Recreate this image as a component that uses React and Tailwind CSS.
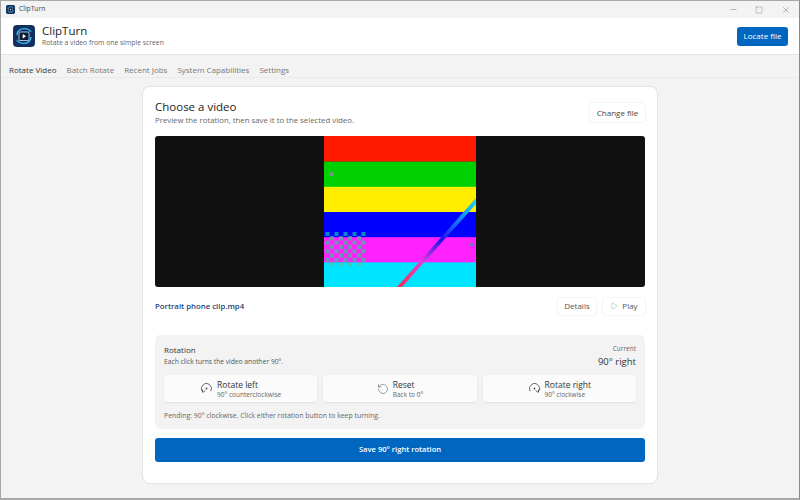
import { Minus, Square, X, Play, RotateCcw } from 'lucide-react'

const font = { fontFamily: '"Open Sans", "Noto Sans", sans-serif' }

const tabs = ['Rotate Video', 'Batch Rotate', 'Recent Jobs', 'System Capabilities', 'Settings']
const stripes = ['#ff1a00', '#00d000', '#ffee00', '#0000ff', '#ff22ff', '#00e5ff']

function AppLogo({ size }) {
  return (
    <svg width={size} height={size} viewBox="0 0 22 22">
      <rect width="22" height="22" rx="4" fill="#12305f" />
      <rect x="6" y="7" width="10" height="8.5" rx="1" fill="#0b1a38" stroke="#cfe6f7" strokeWidth="0.8" />
      <path d="M9.7 9l3.4 2.2-3.4 2.2z" fill="#ffffff" />
      <path d="M4 10C4 5.5 8 3.6 11 3.6c3 0 5.6 1 7 3.4" fill="none" stroke="#39b6ea" strokeWidth="1.4" />
      <path d="M18 12c0 4.5-4 6.4-7 6.4-3 0-5.6-1-7-3.4" fill="none" stroke="#39b6ea" strokeWidth="1.4" />
    </svg>
  )
}

// circular arrow with a dot in the middle, mirrored for the left turn
function TurnIcon({ left }) {
  return (
    <svg width="13" height="13" viewBox="0 0 13 13" fill="none" stroke="#444" strokeWidth="0.8" className={left ? '-scale-x-100' : ''}>
      <path d="M2.2 9.2A5 5 0 1 1 10.2 10" />
      <path d="M7.6 8.6l2.6 1.8.4-3" />
      <circle cx="6.5" cy="6.5" r="0.9" fill="#444" stroke="none" />
    </svg>
  )
}

function VideoFrame() {
  const dots = []
  for (let row = 0; row < 8; row++) {
    for (let col = 0; col < 9; col++) {
      if ((row + col) % 2 === 0) dots.push([1.5 + col * 4.5, 96 + row * 4.3])
    }
  }
  const dotColor = (y) => (y < 100 ? '#0a84c8' : y > 125 ? '#40c8b8' : '#6c94b4')
  return (
    <svg width="152" height="151" viewBox="0 0 152 151" className="block">
      <defs>
        <linearGradient id="streak" x1="72" y1="151" x2="152" y2="62" gradientUnits="userSpaceOnUse">
          <stop offset="0" stopColor="#ff2a4a" />
          <stop offset="0.3" stopColor="#e040d0" />
          <stop offset="0.55" stopColor="#2010f0" />
          <stop offset="0.8" stopColor="#1090ff" />
          <stop offset="1" stopColor="#20e0e0" />
        </linearGradient>
      </defs>
      {stripes.map((color, i) => (
        <rect key={color} x="0" y={i * 25.17 + (i ? 0.5 : 0)} width="152" height="25.8" fill={color} />
      ))}
      <rect x="5" y="36" width="5" height="4" fill="#6a9a70" />
      <rect x="145" y="107" width="4" height="3" fill="#7a70c0" />
      {dots.map(([x, y], i) => (
        <rect key={i} x={x} y={y} width="4" height="4" fill={dotColor(y)} />
      ))}
      <path d="M73 151L152 62v6L78 151z" fill="url(#streak)" />
    </svg>
  )
}

function RotationButton({ icon, title, sub }) {
  return (
    <button className="flex-1 h-[27px] bg-[#fbfbfb] rounded-[3px] shadow-[0_1px_2px_rgba(0,0,0,0.08)] flex items-center justify-center gap-[4px]">
      {icon}
      <span className="flex flex-col items-start">
        <span className="text-[8.5px] leading-[11px] text-[#333]">{title}</span>
        <span className="text-[6.5px] leading-[9px] text-[#666]">{sub}</span>
      </span>
    </button>
  )
}

export default function App() {
  return (
    <div style={font} className="w-[800px] h-[500px] overflow-hidden bg-[#f3f3f3] flex flex-col border-t border-l border-[#a8a8a8] border-b-2 border-r border-r-[#8a8a8a]">
      {/* Title bar */}
      <div className="h-[17px] flex items-center shrink-0 pl-[5px]">
        <AppLogo size={9} />
        <span className="ml-[4px] text-[6.7px] text-[#444]">ClipTurn</span>
        <div className="ml-auto flex items-center text-[#555]">
          <Minus size={9} strokeWidth={1} className="mr-[17px]" />
          <Square size={8} strokeWidth={1} className="mr-[18px]" />
          <X size={10} strokeWidth={1} className="mr-[8px]" />
        </div>
      </div>

      {/* Header */}
      <div className="h-[37px] bg-white flex items-center shrink-0 pl-[12px] pr-[11px] border-b border-[#e4e4e4]">
        <AppLogo size={22} />
        <div className="ml-[7px] flex flex-col">
          <span className="text-[11.5px] leading-[14px] text-[#222]">ClipTurn</span>
          <span className="text-[6.8px] leading-[10px] text-[#666]">Rotate a video from one simple screen</span>
        </div>
        <button className="ml-auto w-[51px] h-[19px] rounded-[3px] bg-[#0067c0] text-white text-[8px] font-medium">Locate file</button>
      </div>

      {/* Tabs */}
      <div className="h-[23px] flex items-center shrink-0 pl-[8px] pt-[7px] gap-[10px] border-b border-[#ebebeb]">
        {tabs.map((tab, i) => (
          <span key={tab} className={`text-[8px] ${i === 0 ? 'text-[#333]' : 'text-[#777]'}`}>{tab}</span>
        ))}
      </div>

      {/* Card */}
      <div className="flex-1 flex justify-center pt-[8px]">
        <div className="w-[516px] h-[398px] bg-white rounded-[8px] border border-[#e5e5e5] px-[12px] pt-[12px] flex flex-col">
          <div className="flex items-start justify-between h-[37px]">
            <div className="flex flex-col">
              <span className="text-[11.5px] leading-[15px] text-[#222]">Choose a video</span>
              <span className="text-[7.8px] leading-[12px] text-[#666]">Preview the rotation, then save it to the selected video.</span>
            </div>
            <button className="mt-[4px] w-[55px] h-[19px] bg-white rounded-[3px] shadow-[0_0_2px_rgba(0,0,0,0.16)] text-[8px] text-[#444]">Change file</button>
          </div>

          <div className="h-[151px] bg-[#111111] rounded-[3px] flex justify-center overflow-hidden">
            <VideoFrame />
          </div>

          <div className="h-[38px] flex items-center justify-between">
            <span className="pt-[2px] text-[7.8px] font-semibold text-[#1f3f78]">Portrait phone clip.mp4</span>
            <div className="flex items-center gap-[7px]">
              <button className="w-[38px] h-[17px] bg-white rounded-[3px] shadow-[0_0_2px_rgba(0,0,0,0.15)] text-[8px] text-[#555]">Details</button>
              <button className="w-[42px] h-[17px] bg-white rounded-[3px] shadow-[0_0_2px_rgba(0,0,0,0.15)] text-[8px] text-[#555] flex items-center justify-center gap-[4px]">
                <Play size={8} strokeWidth={1} className="text-[#4a9a50]" />
                Play
              </button>
            </div>
          </div>

          <div className="mt-[10px] h-[94px] bg-[#f3f3f3] rounded-[5px] px-[9px] pt-[9px] flex flex-col">
            <div className="flex items-start justify-between h-[31px]">
              <div className="flex flex-col">
                <span className="text-[8px] leading-[12px] text-[#333]">Rotation</span>
                <span className="text-[6.7px] leading-[11px] text-[#555]">Each click turns the video another 90°.</span>
              </div>
              <div className="flex flex-col items-end">
                <span className="text-[6.5px] leading-[10px] text-[#666]">Current</span>
                <span className="text-[9.5px] leading-[15px] text-[#333]">90° right</span>
              </div>
            </div>
            <div className="flex gap-[6px]">
              <RotationButton icon={<TurnIcon left />} title="Rotate left" sub="90° counterclockwise" />
              <RotationButton
                icon={<RotateCcw size={12} strokeWidth={1} className="text-[#444]" />}
                title="Reset"
                sub="Back to 0°"
              />
              <RotationButton icon={<TurnIcon />} title="Rotate right" sub="90° clockwise" />
            </div>
            <span className="mt-[9px] text-[6.9px] leading-[10px] text-[#666]">Pending: 90° clockwise. Click either rotation button to keep turning.</span>
          </div>

          <button className="mt-[9px] h-[24px] w-full bg-[#0067c0] rounded-[3px] text-white text-[7.6px] font-semibold">Save 90° right rotation</button>
        </div>
      </div>
    </div>
  )
}
